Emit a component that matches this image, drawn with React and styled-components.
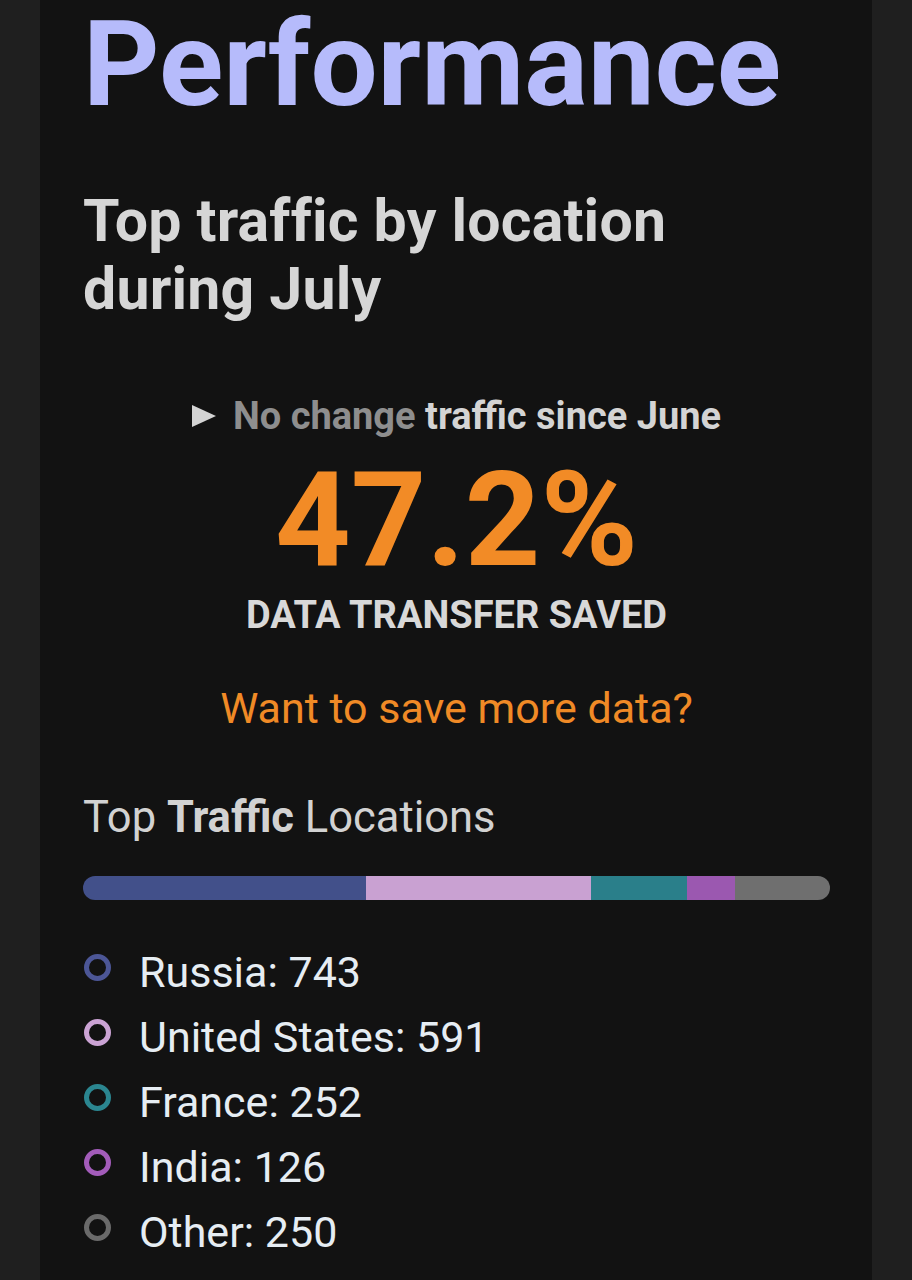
import React from 'react'
import styled, { createGlobalStyle } from 'styled-components'

const locations = [
  { name: 'Russia', value: 743, color: '#42508a', ring: '#4c5696' },
  { name: 'United States', value: 591, color: '#c9a1d2', ring: '#cba3d4' },
  { name: 'France', value: 252, color: '#2a7f8a', ring: '#2b8690' },
  { name: 'India', value: 126, color: '#9b58b0', ring: '#a35cba' },
  { name: 'Other', value: 250, color: '#6f6f6f', ring: '#6a6a6a' }
]

const total = locations.reduce((sum, l) => sum + l.value, 0)

const App = () => {
  return (
    <>
      <GlobalStyle />
      <Page>
        <Panel>
          <Title>Performance</Title>
          <Heading>
            Top traffic by location
            <br />
            during July
          </Heading>

          <Summary>
            <Change>
              <Arrow viewBox="0 0 24 22">
                <polygon points="0,0 24,11 0,22" />
              </Arrow>
              <span>
                <Muted>No change</Muted> traffic since June
              </span>
            </Change>
            <BigNumber>47.2%</BigNumber>
            <Caption>DATA TRANSFER SAVED</Caption>
            <MoreLink href="#">Want to save more data?</MoreLink>
          </Summary>

          <SectionTitle>
            Top <strong>Traffic</strong> Locations
          </SectionTitle>

          <Bar>
            {locations.map((l) => (
              <Segment key={l.name} $color={l.color} style={{ width: `${(l.value / total) * 100}%` }} />
            ))}
          </Bar>

          <Legend>
            {locations.map((l) => (
              <LegendItem key={l.name}>
                <Ring $color={l.ring} />
                {l.name}: {l.value}
              </LegendItem>
            ))}
          </Legend>
        </Panel>
      </Page>
    </>
  )
}

const GlobalStyle = createGlobalStyle`
  html, body {
    margin: 0;
    padding: 0;
    background: #1f1f1f;
  }
  body {
    font-family: Roboto, "Noto Sans", sans-serif;
  }
`

const Page = styled.div`
  min-height: 1280px;
  padding: 0 40px;
  background: #1f1f1f;
`

const Panel = styled.div`
  min-height: 1280px;
  background: #121212;
  padding: 0 42px 0 43px;
  box-sizing: border-box;
  display: flex;
  flex-direction: column;
`

const Title = styled.h1`
  margin: 0;
  font-size: 119px;
  line-height: 1.1;
  font-weight: 700;
  color: #b6bbfb;
`

const Heading = styled.h2`
  margin: 56px 0 0;
  font-size: 59px;
  line-height: 68px;
  font-weight: 700;
  color: #d6d6d6;
  letter-spacing: 0.2px;
`

const Summary = styled.div`
  display: flex;
  flex-direction: column;
  align-items: center;
  margin-top: 74px;
`

const Change = styled.div`
  display: flex;
  align-items: center;
  gap: 17px;
  font-size: 38px;
  line-height: 1;
  font-weight: 700;
  color: #d4d4d4;
`

const Arrow = styled.svg`
  width: 24px;
  height: 22px;
  fill: #d4d4d4;
  flex-shrink: 0;
`

const Muted = styled.span`
  color: #8e8e8e;
`

const BigNumber = styled.div`
  margin-top: 19px;
  font-size: 132px;
  line-height: 1;
  font-weight: 700;
  color: #f28b26;
`

const Caption = styled.div`
  margin-top: 10px;
  font-size: 38px;
  line-height: 1;
  font-weight: 700;
  color: #d8d8d8;
`

const MoreLink = styled.a`
  margin-top: 53px;
  font-size: 43px;
  line-height: 1;
  font-weight: 400;
  color: #f08a26;
  text-decoration: none;
`

const SectionTitle = styled.div`
  margin-top: 66px;
  font-size: 43.5px;
  line-height: 1;
  font-weight: 400;
  color: #d2d2d2;

  strong {
    font-weight: 700;
  }
`

const Bar = styled.div`
  margin-top: 37px;
  height: 24px;
  border-radius: 12px;
  overflow: hidden;
  display: flex;
`

const Segment = styled.div`
  height: 100%;
  background: ${(p) => p.$color};
`

const Legend = styled.ul`
  list-style: none;
  margin: 40px 0 0;
  padding: 0;
`

const LegendItem = styled.li`
  display: flex;
  align-items: center;
  font-size: 43px;
  line-height: 65px;
  color: #e6edf3;
`

const Ring = styled.span`
  width: 27px;
  height: 27px;
  box-sizing: border-box;
  border-radius: 50%;
  border: 5px solid ${(p) => p.$color};
  margin: -10px 28px 0 1px;
  flex-shrink: 0;
`

export default App
